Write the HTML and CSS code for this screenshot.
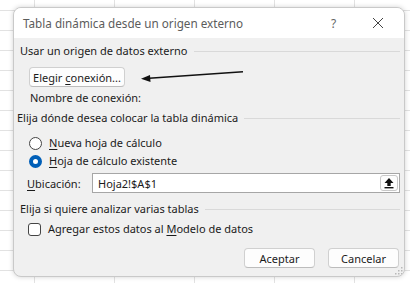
FILE: index.html
```html
<!DOCTYPE html>
<html lang="es">
<head>
<meta charset="utf-8">
<title>Tabla dinámica desde un origen externo</title>
<link rel="stylesheet" href="styles.css">
</head>
<body>
<div class="dialog">
  <div class="titlebar">
    <span class="title">Tabla dinámica desde un origen externo</span>
    <span class="help">?</span>
    <span class="close"><svg width="12" height="12" viewBox="0 0 12 12"><path d="M1 1L11 11M11 1L1 11" stroke="#444" stroke-width="1" fill="none"/></svg></span>
  </div>
  <div class="content">
    <div class="group-head g1"><span>Usar un origen de datos externo</span><i class="rule"></i></div>
    <button class="btn choose">Elegir <u>c</u>onexión...</button>
    <div class="conn-name">Nombre de conexión:</div>
    <div class="group-head g2"><span>Elija dónde desea colocar la tabla dinámica</span><i class="rule"></i></div>
    <div class="opt-row r1"><span class="radio"></span><span><u>N</u>ueva hoja de cálculo</span></div>
    <div class="opt-row r2"><span class="radio on"></span><span><u>H</u>oja de cálculo existente</span></div>
    <div class="loc-row">
      <span class="loc-label"><u>U</u>bicación:</span>
      <div class="input"><span class="value">Hoja2!$A$1</span><span class="pick"><svg width="12" height="12" viewBox="0 0 12 12"><path d="M6 1L1.5 6H4.3V9H7.7V6H10.5Z" fill="#111"/><rect x="1.5" y="10" width="9" height="1.4" fill="#111"/></svg></span></div>
    </div>
    <div class="group-head g3"><span>Elija si quiere analizar varias tablas</span><i class="rule"></i></div>
    <div class="opt-row c1"><span class="check"></span><span>Agregar estos datos al <u>M</u>odelo de datos</span></div>
    <div class="actions">
      <button class="btn act">Aceptar</button>
      <button class="btn act">Cancelar</button>
    </div>
  </div>
  <svg class="grip" width="8" height="8" viewBox="0 0 8 8"><g fill="#b8b8b8"><rect x="6" y="0" width="1.5" height="1.5"/><rect x="3" y="3" width="1.5" height="1.5"/><rect x="6" y="3" width="1.5" height="1.5"/><rect x="0" y="6" width="1.5" height="1.5"/><rect x="3" y="6" width="1.5" height="1.5"/><rect x="6" y="6" width="1.5" height="1.5"/></g></svg>
</div>
<svg class="arrow" width="104" height="16" viewBox="0 0 104 16"><path d="M8 12.2L102 5.8" stroke="#111" stroke-width="1.4" fill="none"/><path d="M0 12.8L9 9L9.5 16Z" fill="#111"/></svg>
</body>
</html>
```
FILE: styles.css
```css
html, body {
  margin: 0;
  padding: 0;
}
body {
  width: 410px;
  height: 283px;
  overflow: hidden;
  position: relative;
  font-family: "Noto Sans", "Open Sans", sans-serif;
  font-size: 11px;
  color: #1b1b1b;
  background-color: #ffffff;
  background-image:
    repeating-linear-gradient(to right, transparent 0, transparent 33px, #e2e2e2 33px, #e2e2e2 34px, transparent 34px, transparent 80px),
    repeating-linear-gradient(to bottom, transparent 0, transparent 10px, #e2e2e2 10px, #e2e2e2 11px, transparent 11px, transparent 20px);
  background-position: 1px 0, 0 0;
}
.dialog {
  margin: 7px 0 0 13px;
  width: 392px;
  height: 270px;
  box-sizing: border-box;
  border: 1px solid #c9c9c9;
  border-radius: 8px;
  background: #f0f0f0;
  box-shadow: 0 0 5px rgba(0,0,0,0.18);
  overflow: hidden;
  position: relative;
  display: flex;
  flex-direction: column;
}
.titlebar {
  height: 30px;
  background: #ffffff;
  display: flex;
  align-items: center;
  flex: none;
}
.title {
  margin-left: 9px;
  color: #5c5c5c;
  font-size: 11.7px;
  flex: 1;
}
.help {
  color: #666;
  font-size: 12px;
  width: 12px;
  margin-right: 29px;
}
.close {
  display: flex;
  margin-right: 20px;
}
.content {
  padding: 0 4px 0 6px;
  display: flex;
  flex-direction: column;
  align-items: flex-start;
}
.group-head {
  align-self: stretch;
  display: flex;
  align-items: center;
  height: 14px;
  line-height: 14px;
}
.group-head .rule {
  flex: 1;
  height: 1px;
  background: #d9d9d9;
  margin-left: 6px;
}
.g1 { margin-top: 6px; }
.g2 { margin-top: 6px; margin-left: -3px; }
.g3 { margin-top: 9px; }
.btn {
  font-family: inherit;
  font-size: 11px;
  color: #1b1b1b;
  background: #fdfdfd;
  border: 1px solid #d0d0d0;
  border-bottom-color: #bcbcbc;
  border-radius: 4px;
  height: 20px;
  padding: 0;
  line-height: 17px;
}
.choose {
  margin: 9px 0 0 9px;
  width: 96px;
}
.conn-name {
  margin: 4px 0 0 10px;
  height: 14px;
  line-height: 14px;
}
.opt-row {
  display: flex;
  align-items: center;
  gap: 7px;
  height: 16px;
  line-height: 16px;
}
.r1 { margin: 10px 0 0 9px; }
.r2 { margin: 2px 0 0 9px; }
.c1 { margin: 5px 0 0 8px; }
.radio {
  width: 13px;
  height: 13px;
  box-sizing: border-box;
  border: 1px solid #444;
  border-radius: 50%;
  background: #fff;
}
.radio.on {
  border: 4px solid #005fb8;
  background: #fff;
}
.check {
  width: 13px;
  height: 13px;
  box-sizing: border-box;
  border: 1px solid #444;
  border-radius: 3px;
  background: #fff;
}
.loc-row {
  margin: 4px 0 0 7px;
  align-self: stretch;
  display: flex;
  align-items: center;
}
.loc-label {
  width: 65px;
}
.input {
  flex: 1;
  height: 20px;
  box-sizing: border-box;
  border: 1px solid #a6a6a6;
  background: #fff;
  display: flex;
  align-items: center;
  padding-left: 5px;
  padding-right: 1px;
}
.value { flex: 1; }
.pick {
  width: 18px;
  height: 16px;
  box-sizing: border-box;
  border: 1px solid #c8c8c8;
  border-radius: 3px;
  display: flex;
  align-items: center;
  justify-content: center;
  background: #fdfdfd;
}
.actions {
  align-self: stretch;
  display: flex;
  justify-content: flex-end;
  gap: 13px;
  margin: 11px 1px 0 0;
}
.act { width: 71px; }
.grip {
  position: absolute;
  right: 1px;
  bottom: 1px;
}
.arrow {
  position: absolute;
  left: 141px;
  top: 66px;
}
u { text-decoration-thickness: 1px; text-underline-offset: 1.5px; }
```
